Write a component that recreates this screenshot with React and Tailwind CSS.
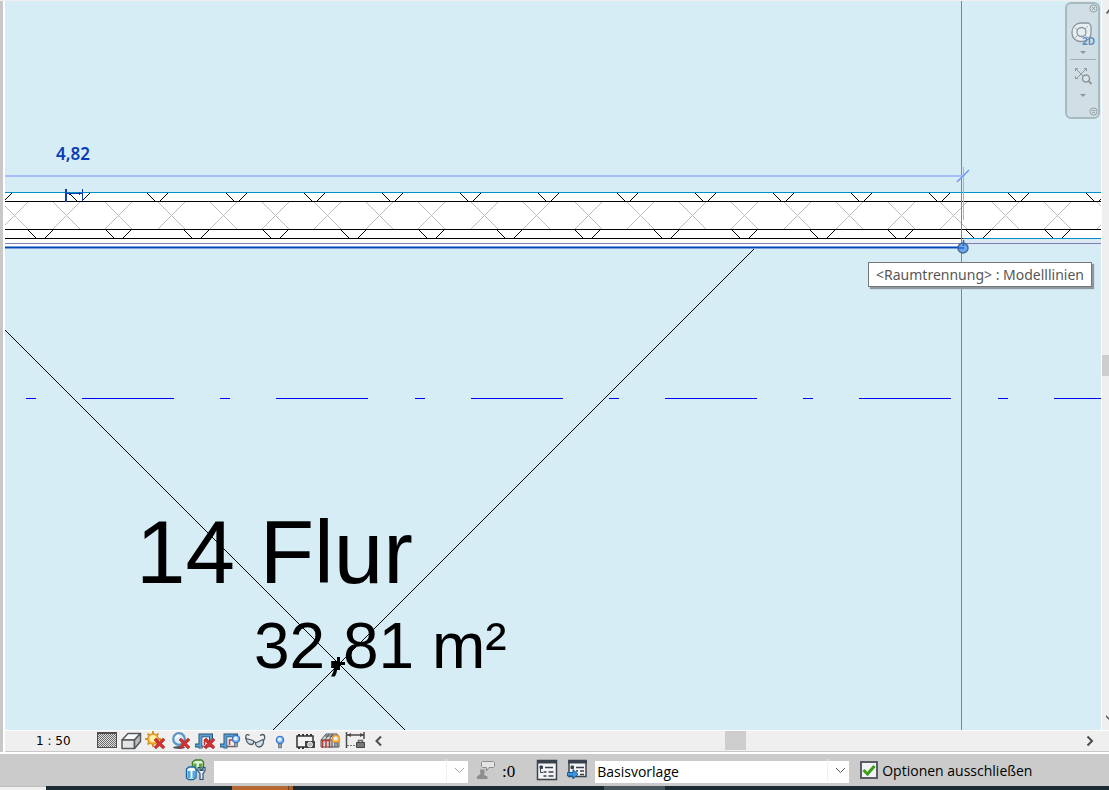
import React from "react";

const range = (n) => Array.from({ length: n }, (_, i) => i);

function RedCross({ x, y }) {
  return (
    <g transform={`translate(${x} ${y})`}>
      <polygon
        points="0,2 2,0 5.500,3.300 9,0 11,2 7.600,5.500 11,9 9,11 5.500,7.700 2,11 0,9 3.400,5.500"
        fill="#d03232"
        stroke="#a82424"
        strokeWidth="0.5"
      />
    </g>
  );
}

function Bulb({ x, y, fill = "#6fb2f2", rim = "#2f6fc0" }) {
  return (
    <g transform={`translate(${x} ${y})`}>
      <circle cx="4" cy="4" r="3.8" fill={fill} stroke={rim} />
      <circle cx="3.6" cy="3.6" r="2" fill="#e4f2ff" />
      <path d="M2.500 7.800h3v4h-3z" fill="#9aa4ad" stroke="#56616b" strokeWidth=".7" />
    </g>
  );
}

function CropFrame() {
  return (
    <g fill="none">
      <path d="M5.500 17.500V4.500H16V12M0 14.500h6" stroke="#27506f" strokeWidth="4" />
      <path d="M5.500 17V4.500H16V12M.500 14.500h5" stroke="#5aa0d8" strokeWidth="2.200" />
      <path d="M7.500 6.500H14V14H7.500z" fill="#efefef" />
      <path d="M9.500 14V9H13" stroke="#c43a34" strokeWidth="1.500" />
      <path d="M7 15.500h9" stroke="#7a5a60" strokeWidth="1.500" />
    </g>
  );
}

const viewTools = [
  {
    label: "Detaillierungsgrad",
    art: (
      <g shapeRendering="crispEdges">
        <rect x="2" y="1" width="20" height="16" fill="#4d4d4d" />
        <rect x="3" y="3" width="18" height="13" fill="#e0e0e0" />
        {range(13).map((r) =>
          range(9).map((c) => (
            <rect key={`${r}-${c}`} x={3 + c * 2 + (r % 2)} y={3 + r} width="1" height="1" fill="#6a6a6a" />
          ))
        )}
      </g>
    ),
  },
  {
    label: "Visueller Stil",
    art: (
      <g stroke="#55585c" strokeWidth="1.500" strokeLinejoin="round">
        <path d="M2 9l6-6.500h12.500L14.500 9z" fill="#fafafa" />
        <path d="M2 9h12.500v8.500H2z" fill="#e3e4e6" />
        <path d="M14.500 9l6-6.500v8l-6 7z" fill="#b9bcc0" />
      </g>
    ),
  },
  {
    label: "Sonnenpfad aus",
    art: (
      <g>
        <path d="M8 0v16M0 8h16M2.500 2.500l11 11M13.500 2.500l-11 11" stroke="#d9951f" strokeWidth="2" />
        <circle cx="8" cy="8" r="5.300" fill="#f3b544" stroke="#c98a20" />
        <circle cx="8" cy="7.500" r="3.500" fill="#fff0a8" />
        <RedCross x="9" y="7" />
      </g>
    ),
  },
  {
    label: "Schatten aus",
    art: (
      <g>
        <ellipse cx="9" cy="16.500" rx="6" ry="1.500" fill="#4b5a66" />
        <circle cx="9" cy="8" r="5.800" fill="#d9ecfa" stroke="#5c94c4" strokeWidth="2.200" />
        <path d="M6 7.500a3 3 0 013-3" stroke="#fff" strokeWidth="2" fill="none" />
        <RedCross x="9" y="7" />
      </g>
    ),
  },
  {
    label: "Ansicht nicht zuschneiden",
    art: (
      <g>
        <CropFrame />
        <RedCross x="9" y="7" />
      </g>
    ),
  },
  {
    label: "Zuschneidebereich anzeigen",
    art: (
      <g>
        <CropFrame />
        <Bulb x="12" y="4" />
      </g>
    ),
  },
  {
    label: "Temporär ausblenden",
    art: (
      <g fill="#cfe2ec" stroke="#4f5a64" strokeWidth="1.300">
        <path d="M1 8L.8 5.500C1 3.500 3 3 4.500 4.500M18.500 9.500c2-2 1.500-6-1-6-1.500 0-2 1-2 1.500" fill="none" />
        <path d="M1 7.500l7 2c1.500 1.500.5 4-1.500 4C3.500 13.500 1.500 11 1 7.500z" />
        <path d="M10.500 12l7.500-3.500c1.500 3-.5 7.500-4 7.500-2 0-3.500-2-3.500-4z" />
        <path d="M8.500 10.500l2.500 1" />
      </g>
    ),
  },
  { label: "Verdeckte Elemente anzeigen", art: <Bulb x="6" y="5" /> },
  {
    label: "Temporäre Ansichtseigenschaften",
    art: (
      <g>
        <path d="M2 5h16v11H2z" fill="#f4f4f4" stroke="#333" strokeWidth="1.500" />
        <path d="M3 4h15M3 17h7" stroke="#333" strokeWidth="2" strokeDasharray="2 2" />
        <path d="M10 10h10v7H10z" fill="#444" />
        <circle cx="15" cy="13.500" r="2.500" fill="#bbb" stroke="#eee" />
      </g>
    ),
  },
  {
    label: "Analytisches Modell",
    art: (
      <g>
        <path d="M1 9l5-6h11l2 3v10H1z" fill="#d4d7da" stroke="#4c5054" />
        <path d="M1 9h11M5 5h12M9 3L5 9M13 3L9 9M12 9v8M15.500 5v11" stroke="#4c5054" />
        <path d="M2.500 17V9.500h7V17M6 9v8" stroke="#b83a35" strokeWidth="1.500" fill="none" />
        <Bulb x="12" y="4" fill="#ffb43a" rim="#ef9621" />
      </g>
    ),
  },
  {
    label: "Abhängigkeiten anzeigen",
    art: (
      <g>
        <path d="M1.500 1v16M19 1v7M2 4h17" stroke="#4a4a4a" strokeWidth="1.500" />
        <path d="M2 4l4-2v4zM19 4l-4-2v4z" fill="#4a4a4a" />
        <path d="M2 14.500h9" stroke="#777" strokeDasharray="2 1" />
        <path d="M13.500 12V9.500h4V12" fill="none" stroke="#666" strokeWidth="1.500" />
        <path d="M11.500 11.500h8v5h-8z" fill="#777" stroke="#444" />
      </g>
    ),
  },
];

function ToolIcon({ children }) {
  return (
    <svg viewBox="0 0 20 20" className="block size-5 overflow-visible" aria-hidden="true">
      {children}
    </svg>
  );
}

function Drawing() {
  return (
    <svg className="absolute inset-0 size-full" aria-hidden="true">
      <g transform="translate(-5 -1)" shapeRendering="crispEdges" fill="none">
        <rect x="0" y="193" width="4000" height="46" fill="#fff" />
        <rect x="0" y="239" width="963" height="8" fill="#fff" />
        <rect x="963" y="239" width="4000" height="4" fill="#dce9f2" />

        <g stroke="#bdbdbd">
          {range(24).map((i) => {
            const x = Math.round(1 + i * 52.17);
            return <path key={i} d={`M${x} 202l27 27M${x + 27} 202l-27 27`} />;
          })}
        </g>
        <g stroke="#000">
          {range(16).map((i) => {
            const x = Math.round(-9 + i * 78.2);
            return <path key={i} d={`M${x} 193l8 8M${x + 13} 201l8-8`} />;
          })}
          {range(16).map((i) => {
            const x = Math.round(28 + i * 78.2);
            return <path key={i} d={`M${x} 230l8 8M${x + 17} 238l8-8`} />;
          })}
          <path d="M0 201.500h4000M0 229.500h4000M0 238.500h963" />
          <path d="M5 330L405 730M755 248L272 731" />
        </g>
        <path d="M0 192.500h4000M963 238.500h4000" stroke="#0090c8" />
        <path d="M0 243.500h4000" stroke="#8080b8" />
        <path d="M961.500 0v2000" stroke="#7a7fb4" />
        <path d="M0 176h963" stroke="#a6bffa" strokeWidth="2" />
        <path d="M963.500 167v53" stroke="#96b0fa" />
        <path d="M0 247.500h963" stroke="#7c9fe0" strokeWidth="3" />
        <path d="M0 247.500h963" stroke="#0048b4" />
        <path d="M26 398.500h4000" stroke="#0000ff" strokeDasharray="10 46 92 46.300" />

        <g stroke="#0a3cb4">
          <path d="M66 189v13" strokeWidth="2" />
          <path d="M82.500 189v12M67 193.500h15" />
          <path d="M69 192v3M79 192v3" />
        </g>
        <path d="M338 657v13M332 663.500h13" stroke="#000" strokeWidth="3" />
      </g>
      <g transform="translate(-5 -1)">
        <path d="M957 182l12-12" stroke="#6f94f5" strokeWidth="1.500" />
        <circle cx="963" cy="248" r="5" fill="#6aa6f2" stroke="#476a94" strokeWidth="1.500" />
        <path d="M958 248h6M963.500 240v6" stroke="#2466c4" strokeWidth="1.500" />
      </g>
    </svg>
  );
}

function NavigationBar() {
  return (
    <nav
      aria-label="Navigationsleiste"
      className="absolute right-px top-px flex h-[117px] w-[35px] flex-col items-center rounded-md border-2 border-[#aab9c0] bg-[#d0dfe5] text-[#8d989e]"
    >
      <button aria-label="Schließen" className="self-end">
        <svg viewBox="0 0 10 10" className="block size-[9px]" fill="none" stroke="currentColor">
          <circle cx="5" cy="5" r="4" />
          <path d="M3.300 3.300l3.400 3.400M6.700 3.300L3.300 6.700" />
        </svg>
      </button>
      <button aria-label="2D-Steuerrad" className="mt-2">
        <svg viewBox="0 0 26 26" className="block size-[26px]" fill="none" stroke="#8b979d">
          <path d="M2 11a9 9 0 019-9h6a4 4 0 014 4v6a8.500 8.500 0 01-8.500 8.500h-2A8.500 8.500 0 012 12z" fill="#e5eef1" strokeWidth="1.300" />
          <circle cx="11.500" cy="11" r="4.500" strokeWidth="1.300" />
          <path d="M5 7l3 2M15 8l3-3M15 14l3 3M8 14l-3 3" strokeWidth=".7" />
          <text x="12" y="24" fill="#5f8dbd" stroke="none" className="font-['Open_Sans',sans-serif] text-[10px] font-bold">
            2D
          </text>
        </svg>
      </button>
      <button aria-label="Steuerrad-Optionen" className="mt-1">
        <svg viewBox="0 0 6 4" className="block h-1 w-1.5" fill="currentColor">
          <path d="M0 0h6L3 3z" />
        </svg>
      </button>
      <div className="mt-1 h-px w-[26px] bg-[#a2afb5]" />
      <button aria-label="Zoom" className="mt-1.5">
        <svg viewBox="0 0 22 22" className="block size-[22px]" fill="none" stroke="currentColor">
          <path d="M4 3l9 9M14 3l-9 9" />
          <path d="M3.500 5V2.500H6M12 2.500h2.500V5M3.500 10v2.500H6" />
          <circle cx="14" cy="12.500" r="3.500" fill="#d9e6ea" strokeWidth="1.500" />
          <path d="M16.500 15l3 3" strokeWidth="2" />
        </svg>
      </button>
      <button aria-label="Zoom-Optionen" className="mt-1.5">
        <svg viewBox="0 0 6 4" className="block h-1 w-1.5" fill="currentColor">
          <path d="M0 0h6L3 3z" />
        </svg>
      </button>
      <button aria-label="Anpassen" className="mb-px mt-auto self-end">
        <svg viewBox="0 0 10 10" className="block size-[9px]" fill="none" stroke="currentColor">
          <circle cx="5" cy="5" r="4" />
          <path d="M3 4h4M3.500 6.200h3" />
        </svg>
      </button>
    </nav>
  );
}

function Combo({ label, value, arrow }) {
  return (
    <div className="relative h-[22px] w-[254px]">
      <select
        aria-label={label}
        defaultValue={value}
        className="size-full appearance-none bg-white pl-0.5 pr-6 text-sm leading-[22px] text-black outline-none"
      >
        <option value={value}>{value}</option>
      </select>
      <svg
        viewBox="0 0 22 22"
        className="pointer-events-none absolute right-0 top-0 size-[22px]"
        fill="none"
        aria-hidden="true"
      >
        <path d="M.5 0v22" stroke="#efefef" />
        <path d="M9 9l4.500 4.500L18 9" stroke={arrow} />
      </svg>
    </div>
  );
}

export default function App() {
  return (
    <div className="flex min-h-screen flex-col bg-[#efefef] pt-px font-['Open_Sans',sans-serif]">
      <main className="flex grow">
        <div className="w-[5px] border-r-2 border-r-white bg-[#c8c8c8]" />
        <section className="relative grow overflow-hidden bg-[#d7edf5]">
          <Drawing />
          <span className="absolute left-[51px] top-[141px] font-['Noto_Sans',sans-serif] text-[17px] font-semibold leading-6 text-[#0a3cb8]">
            4,82
          </span>
          <span className="absolute left-[131px] top-[501px] whitespace-nowrap font-['Liberation_Sans',sans-serif] text-[89px] leading-[100px] text-black">
            14 Flur
          </span>
          <span className="absolute left-[249px] top-[608px] whitespace-nowrap font-['Liberation_Sans',sans-serif] text-[64px] leading-[74px] text-black">
            32,81 m²
          </span>
          <div
            role="tooltip"
            className="absolute right-[9px] top-[261px] whitespace-nowrap border border-[#767676] bg-white px-[7px] font-['Noto_Sans',sans-serif] text-sm leading-[23px] text-[#575757] shadow-[2px_2px_1px_#8d999e]"
          >
            &lt;Raumtrennung&gt; : Modelllinien
          </div>
          <NavigationBar />
        </section>
        <div className="flex w-2 flex-col items-end overflow-hidden border-l border-white bg-[#efefef] pt-2">
          <svg viewBox="0 0 3 6" className="h-1.5 w-[3px]" fill="#555" aria-hidden="true">
            <path d="M0 4l3-4v3L1 5z" />
          </svg>
          <div className="mt-[340px] h-[21px] w-full bg-[#cdcdcd]" />
          <svg viewBox="0 0 3 6" className="mb-2.5 mt-auto h-1.5 w-[3px]" fill="#555" aria-hidden="true">
            <path d="M0 1l3 3v2L0 3z" />
          </svg>
        </div>
      </main>

      <div className="flex h-6 border-b-2 border-white">
        <div className="w-[5px] border-r-2 border-r-white bg-[#c8c8c8]" />
        <div className="flex grow items-start border-b border-t border-b-[#c8c8c8] border-t-white pr-3.5">
          <span className="w-[90px] pl-[31px] font-['DejaVu_Sans',sans-serif] text-xs leading-5 text-black">1 : 50</span>
          <div className="flex gap-[5px]">
            {viewTools.map((t) => (
              <button key={t.label} aria-label={t.label} title={t.label}>
                <ToolIcon>{t.art}</ToolIcon>
              </button>
            ))}
          </div>
          <button aria-label="Nach links" className="ml-2 mt-1">
            <svg viewBox="0 0 10 12" className="block h-3 w-2.5" fill="none" stroke="#4d4d4d" strokeWidth="2">
              <path d="M8 1.500L3.500 6 8 10.500" />
            </svg>
          </button>
          <div className="flex grow pl-[342px]">
            <div className="h-[19px] w-[21px] bg-[#cdcdcd]" />
          </div>
          <button aria-label="Nach rechts" className="mt-1">
            <svg viewBox="0 0 10 12" className="block h-3 w-2.5" fill="none" stroke="#4d4d4d" strokeWidth="2">
              <path d="M2.500 1.500L7 6l-4.500 4.500" />
            </svg>
          </button>
        </div>
      </div>

      <footer>
        <div className="flex h-8 items-center bg-[#cbcbcb] pl-[185px]">
          <button aria-label="Bearbeitungsbereiche">
            <svg viewBox="0 0 22 22" className="block size-[22px]">
              <path d="M7.500 3l3-2h6l2 2v6l-3 2h-6l-2-1z" fill="#e3f3da" stroke="#3a7f22" strokeWidth="1.400" />
              <path d="M8.500 4.500h3v5h-3zM14 4.500h3.500v5H14z" fill="#5aa63c" />
              <path d="M1.500 10l2.500-2h5.500l1.500 2v8.500L8.500 20.500h-5l-2-1.500z" fill="#f2f9fd" stroke="#1d68a4" strokeWidth="1.400" />
              <path d="M2.500 12h3v7h-3zM7.500 12h3v7h-3z" fill="#4fa6de" />
              <path
                d="M13 8.500h2v3h3v-3h2V12l-2 2.500v6h-3v-6L13 12z"
                fill="#e8eef5"
                stroke="#2f4f7c"
                strokeWidth="1.200"
              />
            </svg>
          </button>
          <div className="ml-[7px]">
            <Combo label="Aktiver Bearbeitungsbereich" value="" arrow="#a4a4a4" />
          </div>
          <button aria-label="Bearbeitungsanfragen" className="ml-2 flex items-center text-black">
            <svg viewBox="0 0 20 22" className="block h-[22px] w-5" stroke="#8e8e8e">
              <path d="M6.500 2.500h11l1 1v4l-1 1H13l-2.500 3.500V8.500h-4l-1-1v-4z" fill="#e4e4e4" />
              <path d="M4 10.500h4.500v4L8 16l3.500 1.500V20H1v-2.500L4.500 15z" fill="#8e8e8e" stroke="none" />
            </svg>
            <span className="ml-1.5 mt-1 font-['Liberation_Serif',serif] text-[17px] leading-5">:0</span>
          </button>
          <button aria-label="Entwurfsoptionen" className="ml-[21px]">
            <svg viewBox="0 0 22 22" className="block size-[22px]" fill="#fff" stroke="#38424c">
              <path d="M1.500 1.500h19v19h-19z" strokeWidth="1.500" fill="#f4f4f4" />
              <path d="M1 3h20" strokeWidth="3" />
              <path d="M4 7h2.500v2.500H4z" fill="#38424c" />
              <path d="M9 8.500h8M7.500 13h3M12.500 13h5M7.500 17h3M12.500 17h5" strokeWidth="1.500" />
              <path d="M4.500 10v3.500H7" fill="none" />
            </svg>
          </button>
          <button aria-label="Zu Optionssatz hinzufügen" className="ml-2">
            <svg viewBox="0 0 22 22" className="block size-[22px]" fill="#fff" stroke="#38424c">
              <path d="M3 1.500h17v16H3z" strokeWidth="1.500" fill="#f4f4f4" />
              <path d="M2 3h19" strokeWidth="3" />
              <path d="M5 7h2.500v2.500H5z" fill="#38424c" />
              <path d="M10 8.500h8M10 12h2M14 12h4M14 15.500h4" strokeWidth="1.500" />
              <path d="M1.500 13.500h5.500v-3l5 4.800-5 4.700v-3H1.500z" fill="#3f94e0" stroke="#14589c" />
            </svg>
          </button>
          <div className="ml-[7px]">
            <Combo label="Entwurfsoption" value="Basisvorlage" arrow="#555" />
          </div>
          <label className="ml-[11px] flex items-center gap-1 whitespace-nowrap text-sm leading-5 text-black">
            <span className="grid size-[18px]">
              <input
                type="checkbox"
                defaultChecked
                className="peer col-start-1 row-start-1 size-[18px] appearance-none border-2 border-[#5a5d66] bg-[#f1f3f6]"
              />
              <svg
                viewBox="0 0 18 18"
                className="pointer-events-none invisible col-start-1 row-start-1 size-[18px] peer-checked:visible"
                fill="none"
                stroke="#3f9e14"
                strokeWidth="3"
                aria-hidden="true"
              >
                <path d="M3.500 9l4 4L14.500 5" />
              </svg>
            </span>
            <span className="pt-0.5">Optionen ausschließen</span>
          </label>
        </div>
        <div className="flex h-1 bg-[#1a2c32]">
          <div className="w-[46px] border-t border-[#bdbdbd] bg-[#efefef]" />
          <div className="ml-[186px] w-14 bg-[#b46a32]" />
          <div className="w-[5px] border-l border-[#70421f] bg-[#a8602c]" />
          <div className="ml-[311px] w-[61px] bg-[#48565b]" />
        </div>
      </footer>
    </div>
  );
}
